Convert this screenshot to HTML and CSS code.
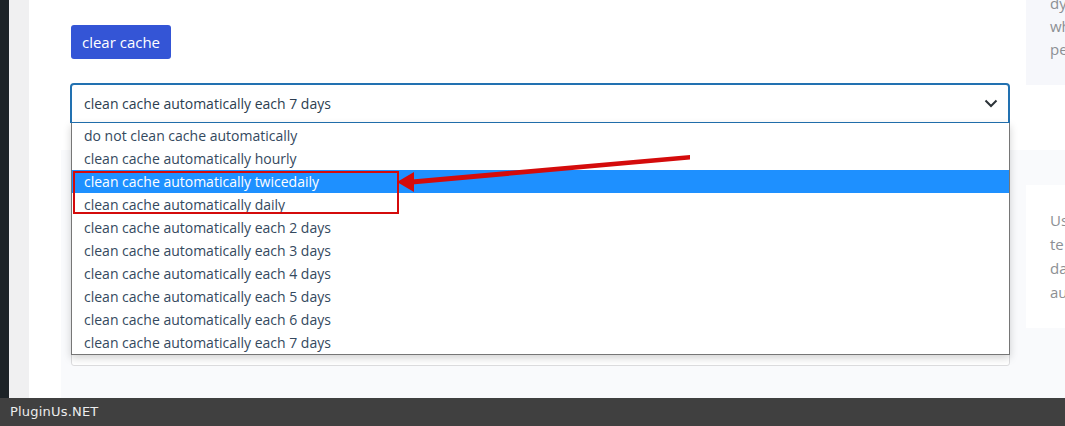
FILE: index.html
```html
<!DOCTYPE html>
<html>
<head>
<meta charset="utf-8">
<link rel="stylesheet" href="styles.css">
</head>
<body>
<div class="page">
  <div class="adminbar"></div>
  <div class="gutter"></div>
  <div class="content">
    <div class="row1">
      <div class="main">
        <button class="btn">clear cache</button>
        <div class="select">
          <span>clean cache automatically each 7 days</span>
          <svg class="chev" width="14" height="9" viewBox="0 0 14 9"><path d="M1.5 1.5 L7 7 L12.5 1.5" fill="none" stroke="#2c3338" stroke-width="2"/></svg>
        </div>
      </div>
      <div class="side side-top">
        <div class="scrolled"><p>dy</p><p>wh</p><p>pe</p></div>
      </div>
    </div>
    <div class="row2">
      <div class="box"></div>
      <div class="side side-card">
        <p>Us</p><p>te</p><p>da</p><p>au</p>
      </div>
    </div>
    <ul class="dropdown">
      <li>do not clean cache automatically</li>
      <li>clean cache automatically hourly</li>
      <li class="active">clean cache automatically twicedaily</li>
      <li>clean cache automatically daily</li>
      <li>clean cache automatically each 2 days</li>
      <li>clean cache automatically each 3 days</li>
      <li>clean cache automatically each 4 days</li>
      <li>clean cache automatically each 5 days</li>
      <li>clean cache automatically each 6 days</li>
      <li>clean cache automatically each 7 days</li>
    </ul>
  </div>
</div>
<footer class="footer">PluginUs.NET</footer>
<div class="redbox"></div>
<svg class="arrow" width="1065" height="426" viewBox="0 0 1065 426">
  <path d="M690 155 L412 179.5 L412 184.5 L690 159.5 Z" fill="#d40b0b"/>
  <path d="M397 182 L414 172 L414 192 Z" fill="#d40b0b"/>
</svg>
</body>
</html>
```
FILE: styles.css
```css
html, body {
  margin: 0;
  padding: 0;
  width: 1065px;
  height: 426px;
  overflow: hidden;
  position: relative;
  font-family: "Open Sans", "Noto Sans", sans-serif;
}
.page {
  display: flex;
  height: 398px;
}
.adminbar {
  flex: 0 0 9px;
  background: #1d2327;
}
.gutter {
  flex: 0 0 20px;
  background: #f0f0f1;
}
.content {
  flex: 1 1 auto;
  min-width: 0;
  overflow: hidden;
  background: #fff;
  position: relative;
  display: flex;
  flex-direction: column;
}
.row1 {
  display: flex;
  height: 150px;
  flex: 0 0 150px;
}
.main {
  flex: 0 0 997px;
  padding: 25px 0 0 41px;
  box-sizing: border-box;
}
.btn {
  display: block;
  margin-left: 1px;
  width: 100px;
  height: 34px;
  border: none;
  border-radius: 3px;
  background: #3455d6;
  color: #fff;
  font-family: inherit;
  font-size: 15px;
  padding: 0;
}
.select {
  margin-top: 24px;
  width: 940px;
  height: 40px;
  box-sizing: border-box;
  border: 2px solid #2271b1;
  border-bottom-width: 1px;
  border-radius: 4px 4px 0 0;
  display: flex;
  align-items: center;
  justify-content: space-between;
  padding: 0 10px 0 12px;
  color: #2c3e50;
  font-size: 14px;
}
.chev { display: block; }
.side {
  flex: 1 1 auto;
  min-width: 0;
  color: #8c8f94;
  font-size: 15px;
  padding-left: 24px;
  white-space: nowrap;
}
.side p { margin: 0; }
.side-top {
  background: #f6f7fb;
  height: 85px;
  box-sizing: border-box;
  line-height: 23px;
  overflow: hidden;
}
.scrolled {
  margin-top: -8px;
}
.row2 {
  flex: 1 1 auto;
  margin-left: 32px;
  background: #f9fafc;
  display: flex;
  align-items: flex-start;
  padding-top: 35px;
}
.box {
  flex: 0 0 939px;
  margin-left: 10px;
  height: 181px;
  box-sizing: border-box;
  background: #fff;
  border: 1px solid #dcdcde;
  border-radius: 0 0 3px 3px;
}
.side-card {
  margin-left: 16px;
  background: #fff;
  height: 143px;
  box-sizing: border-box;
  padding-top: 23px;
  line-height: 24px;
}
.dropdown {
  position: absolute;
  left: 42px;
  top: 123px;
  width: 939px;
  margin: 0;
  padding: 0;
  list-style: none;
  background: #fff;
  border: 1px solid #767676;
  border-top: none;
  box-sizing: border-box;
  height: 232px;
  padding-top: 1px;
  box-shadow: 0 3px 8px rgba(0,0,0,0.18);
  font-size: 14px;
}
.dropdown li {
  height: 23px;
  line-height: 23px;
  padding-left: 12px;
  color: #34495e;
}
.dropdown li.active {
  background: #1e90ff;
  color: #fff;
}
.footer {
  height: 28px;
  background: #404040;
  color: #ececec;
  font-family: "DejaVu Sans", sans-serif;
  font-size: 13px;
  line-height: 28px;
  padding-left: 10px;
  letter-spacing: 0.2px;
}
.redbox {
  position: absolute;
  left: 73px;
  top: 171px;
  width: 326px;
  height: 43px;
  box-sizing: border-box;
  border: 2px solid #d40b0b;
}
.arrow {
  position: absolute;
  left: 0;
  top: 0;
  pointer-events: none;
}
```
